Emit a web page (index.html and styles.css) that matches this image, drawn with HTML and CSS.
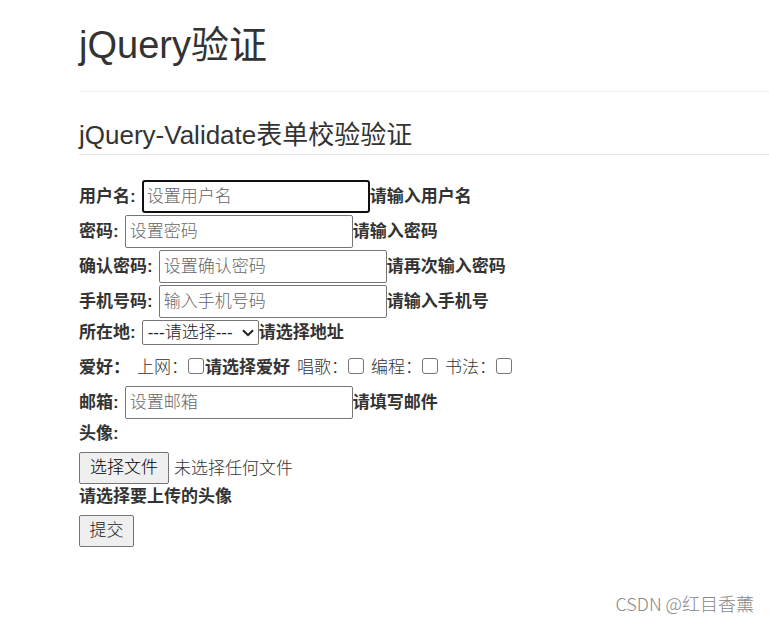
FILE: index.html
```html
<!DOCTYPE html>
<html lang="zh-CN">
<head>
<meta charset="utf-8">
<title>jQuery验证</title>
<link rel="stylesheet" href="styles.css">
</head>
<body>
<main class="container">
  <h1 class="page-header">jQuery验证</h1>
  <form class="form">
    <h2 class="legend">jQuery-Validate表单校验验证</h2>
    <div class="row">
      <label class="name" for="username">用户名:</label>
      <input class="field active" id="username" type="text" placeholder="设置用户名">
      <strong>请输入用户名</strong>
    </div>
    <div class="row">
      <label class="name" for="password">密码:</label>
      <input class="field" id="password" type="password" placeholder="设置密码">
      <strong>请输入密码</strong>
    </div>
    <div class="row">
      <label class="name" for="confirm">确认密码:</label>
      <input class="field" id="confirm" type="password" placeholder="设置确认密码">
      <strong>请再次输入密码</strong>
    </div>
    <div class="row">
      <label class="name" for="phone">手机号码:</label>
      <input class="field" id="phone" type="tel" placeholder="输入手机号码">
      <strong>请输入手机号</strong>
    </div>
    <div class="row">
      <label class="name" for="address">所在地:</label>
      <span class="select">
        <select id="address"><option>---请选择---</option></select>
        <svg class="chevron" viewBox="0 0 12 8" aria-hidden="true"><path d="M1 1.2 6 6.2 11 1.2"/></svg>
      </span>
      <strong>请选择地址</strong>
    </div>
    <div class="row hobbies">
      <strong class="hobby-title">爱好：</strong>
      <label class="hobby">上网：<input type="checkbox"></label>
      <strong class="hobby-hint">请选择爱好</strong>
      <label class="hobby">唱歌：<input type="checkbox"></label>
      <label class="hobby">编程：<input type="checkbox"></label>
      <label class="hobby">书法：<input type="checkbox"></label>
    </div>
    <div class="row">
      <label class="name" for="email">邮箱:</label>
      <input class="field" id="email" type="email" placeholder="设置邮箱">
      <strong>请填写邮件</strong>
    </div>
    <div class="row"><label class="name" for="avatar">头像:</label></div>
    <div class="upload">
      <label class="button pick">选择文件<input class="file" id="avatar" type="file"></label>
      <span>未选择任何文件</span>
    </div>
    <strong class="upload-hint">请选择要上传的头像</strong>
    <button class="button submit" type="submit">提交</button>
  </form>
</main>
<footer class="watermark">CSDN @红目香薰</footer>
</body>
</html>
```
FILE: styles.css
```css
* { box-sizing: border-box; }

body {
  display: flex;
  flex-direction: column;
  min-height: 100vh;
  margin: 0;
  background: #fff;
  color: #333;
  font: 300 17px/25px "Liberation Sans", "Noto Sans CJK SC", sans-serif;
}

input, select, button { margin: 0; font: inherit; }

strong { font-weight: 700; }

.container { padding-left: 79px; }

.page-header {
  margin: 0 0 24px;
  padding: 24px 0;
  border-bottom: 1px solid #eee;
  font-size: 38px;
  line-height: 43px;
  font-weight: 400;
}

.form {
  display: flex;
  flex-direction: column;
  gap: 2px;
}

.legend {
  margin: 0 0 23px;
  padding-top: 1px;
  border-bottom: 1px solid #e5e5e5;
  font-size: 26px;
  line-height: 37px;
  font-weight: 400;
}

.row, .upload {
  display: flex;
  align-items: center;
}

.name { margin-right: 6px; font-weight: 700; }

.field {
  width: 228px;
  height: 33px;
  padding: 0 4px;
  border: 1px solid #767676;
  border-radius: 2px;
  background: #fff;
  color: #333;
}

.field::placeholder { color: #666; opacity: 1; }

.field.active, .field:focus {
  padding: 0 3px;
  border: 2px solid #101010;
  border-radius: 3px;
  outline: 0;
}

.select { position: relative; display: flex; }

.select select {
  width: 117px;
  height: 25px;
  padding: 0 5px;
  border: 1px solid #767676;
  border-radius: 2px;
  background: #fff;
  color: #222;
  line-height: 23px;
  appearance: none;
}

.chevron {
  position: absolute;
  top: 9px;
  right: 5px;
  width: 12px;
  height: 8px;
  fill: none;
  stroke: #222;
  stroke-width: 2;
  pointer-events: none;
}

.hobbies { height: 37px; padding-top: 3px; }
.hobby-title, .hobby, .hobby-hint { margin-right: 7px; }
.hobby { display: flex; }

.hobby input {
  width: 16px;
  height: 16px;
  margin: 3px 0 0;
  border: 1px solid #767676;
  border-radius: 3px;
  background: #fff;
  appearance: none;
}

.hobby input:checked { background: #0075ff; }
.hobby:has(+ .hobby-hint) { margin-right: 1px; }

.button {
  height: 32px;
  padding: 0 8px;
  border: 1px solid #767676;
  border-radius: 2px;
  background: #efefef;
  color: #222;
  line-height: 30px;
}

.upload { gap: 5px; margin-top: 4px; }
.upload-hint { line-height: 21px; }
.pick { position: relative; min-width: 90px; color: #000; text-align: center; }
.submit { align-self: flex-start; min-width: 55px; margin-top: 6px; }

.file {
  position: absolute;
  inset: 0;
  width: 100%;
  opacity: 0;
}

.watermark {
  margin-top: auto;
  padding: 0 15px 7px;
  color: #888;
  font-family: "Noto Sans CJK SC", sans-serif;
  font-size: 18px;
  text-align: right;
}
```
